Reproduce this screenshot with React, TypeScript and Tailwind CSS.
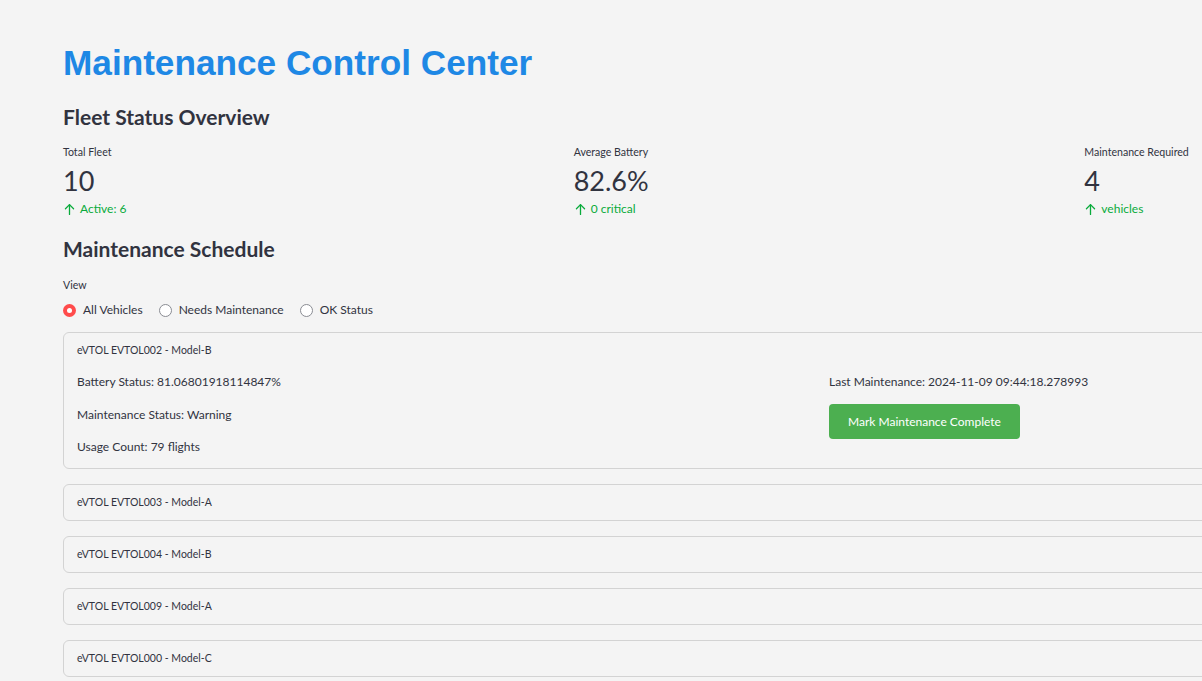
import { useState } from 'react'

type Vehicle = {
  id: string
  model: string
  battery: string
  status: string
  usage: number
  lastMaintenance: string
}

const vehicles: Vehicle[] = [
  { id: 'EVTOL002', model: 'Model-B', battery: '81.06801918114847', status: 'Warning', usage: 79, lastMaintenance: '2024-11-09 09:44:18.278993' },
  { id: 'EVTOL003', model: 'Model-A', battery: '74.2', status: 'Warning', usage: 61, lastMaintenance: '2024-11-02 10:12:40.118204' },
  { id: 'EVTOL004', model: 'Model-B', battery: '88.5', status: 'Warning', usage: 93, lastMaintenance: '2024-10-28 14:03:55.902341' },
  { id: 'EVTOL009', model: 'Model-A', battery: '79.9', status: 'Warning', usage: 58, lastMaintenance: '2024-11-05 08:21:07.553102' },
  { id: 'EVTOL000', model: 'Model-C', battery: '90.1', status: 'Warning', usage: 84, lastMaintenance: '2024-10-30 16:47:29.004417' },
]

const metrics = [
  { label: 'Total Fleet', value: '10', delta: 'Active: 6' },
  { label: 'Average Battery', value: '82.6%', delta: '0 critical' },
  { label: 'Maintenance Required', value: '4', delta: 'vehicles' },
]

function ArrowUp() {
  return (
    <svg width="13" height="13" viewBox="0 0 24 24" fill="none" stroke="currentColor" strokeWidth="2.4" strokeLinecap="round" strokeLinejoin="round">
      <path d="M12 21V3" />
      <path d="M4.5 10.5L12 3l7.5 7.5" />
    </svg>
  )
}

export default function App() {
  const [view, setView] = useState('All Vehicles')
  const [open, setOpen] = useState<string | null>('EVTOL002')

  return (
    <div className="min-h-screen w-full overflow-hidden bg-[#f4f4f4] text-[#31333f]" style={{ fontFamily: 'Lato, "Noto Sans", sans-serif' }}>
      <div className="w-[1516px] ml-[63px] pt-[42px] pb-10">
        <h1 className="text-[35.2px] leading-[42px] font-bold text-[#1e88e5]" style={{ fontFamily: '"Liberation Sans", Arial, sans-serif' }}>
          Maintenance Control Center
        </h1>

        <h3 className="mt-[19px] text-[21px] leading-[28px] font-bold">Fleet Status Overview</h3>

        <div className="mt-[14px] grid grid-cols-3 gap-4">
          {metrics.map((m) => (
            <div key={m.label} className="flex flex-col">
              <div className="text-[10.6px] leading-[14px]">{m.label}</div>
              <div className="mt-[4px] text-[27px] leading-[36px]">{m.value}</div>
              <div className="mt-[2px] flex items-center gap-[4px] text-[12px] leading-[16px] text-[#09ab3b]">
                <ArrowUp />
                <span>{m.delta}</span>
              </div>
            </div>
          ))}
        </div>

        <h3 className="mt-[18px] text-[21px] leading-[28px] font-bold">Maintenance Schedule</h3>

        <div className="mt-[15px] text-[10.6px] leading-[14px]">View</div>
        <div className="mt-[9px] flex items-center gap-[16px] text-[12px] leading-[18px]">
          {['All Vehicles', 'Needs Maintenance', 'OK Status'].map((opt) => {
            const sel = view === opt
            return (
              <label key={opt} className="flex items-center gap-[7px] cursor-pointer" onClick={() => setView(opt)}>
                {sel ? (
                  <span className="w-[13px] h-[13px] rounded-full bg-[#ff4b4b] flex items-center justify-center">
                    <span className="w-[5px] h-[5px] rounded-full bg-white" />
                  </span>
                ) : (
                  <span className="w-[13px] h-[13px] rounded-full border border-[#8a8c93] bg-white" />
                )}
                <span>{opt}</span>
              </label>
            )
          })}
        </div>

        <div className="mt-[13px] flex flex-col gap-[15px]">
          {vehicles.map((v) => {
            const isOpen = open === v.id
            return (
              <div key={v.id} className="rounded-[6px] border border-[#d3d3d3]">
                <button
                  className="w-full text-left px-[13px] h-[35px] flex items-center text-[10.5px]"
                  onClick={() => setOpen(isOpen ? null : v.id)}
                >
                  eVTOL {v.id} - {v.model}
                </button>
                {isOpen && (
                  <div className="px-[13px] pb-[12px] grid grid-cols-2 gap-4 text-[12px] leading-[18px]">
                    <div className="flex flex-col gap-[14.5px] pt-[5px]">
                      <div>Battery Status: {v.battery}%</div>
                      <div>Maintenance Status: {v.status}</div>
                      <div>Usage Count: {v.usage} flights</div>
                    </div>
                    <div className="flex flex-col pt-[5px]">
                      <div>Last Maintenance: {v.lastMaintenance}</div>
                      <button className="mt-[13px] self-start h-[35px] px-[19px] rounded-[4px] bg-[#4caf50] text-white text-[12px]">
                        Mark Maintenance Complete
                      </button>
                    </div>
                  </div>
                )}
              </div>
            )
          })}
        </div>
      </div>
    </div>
  )
}
